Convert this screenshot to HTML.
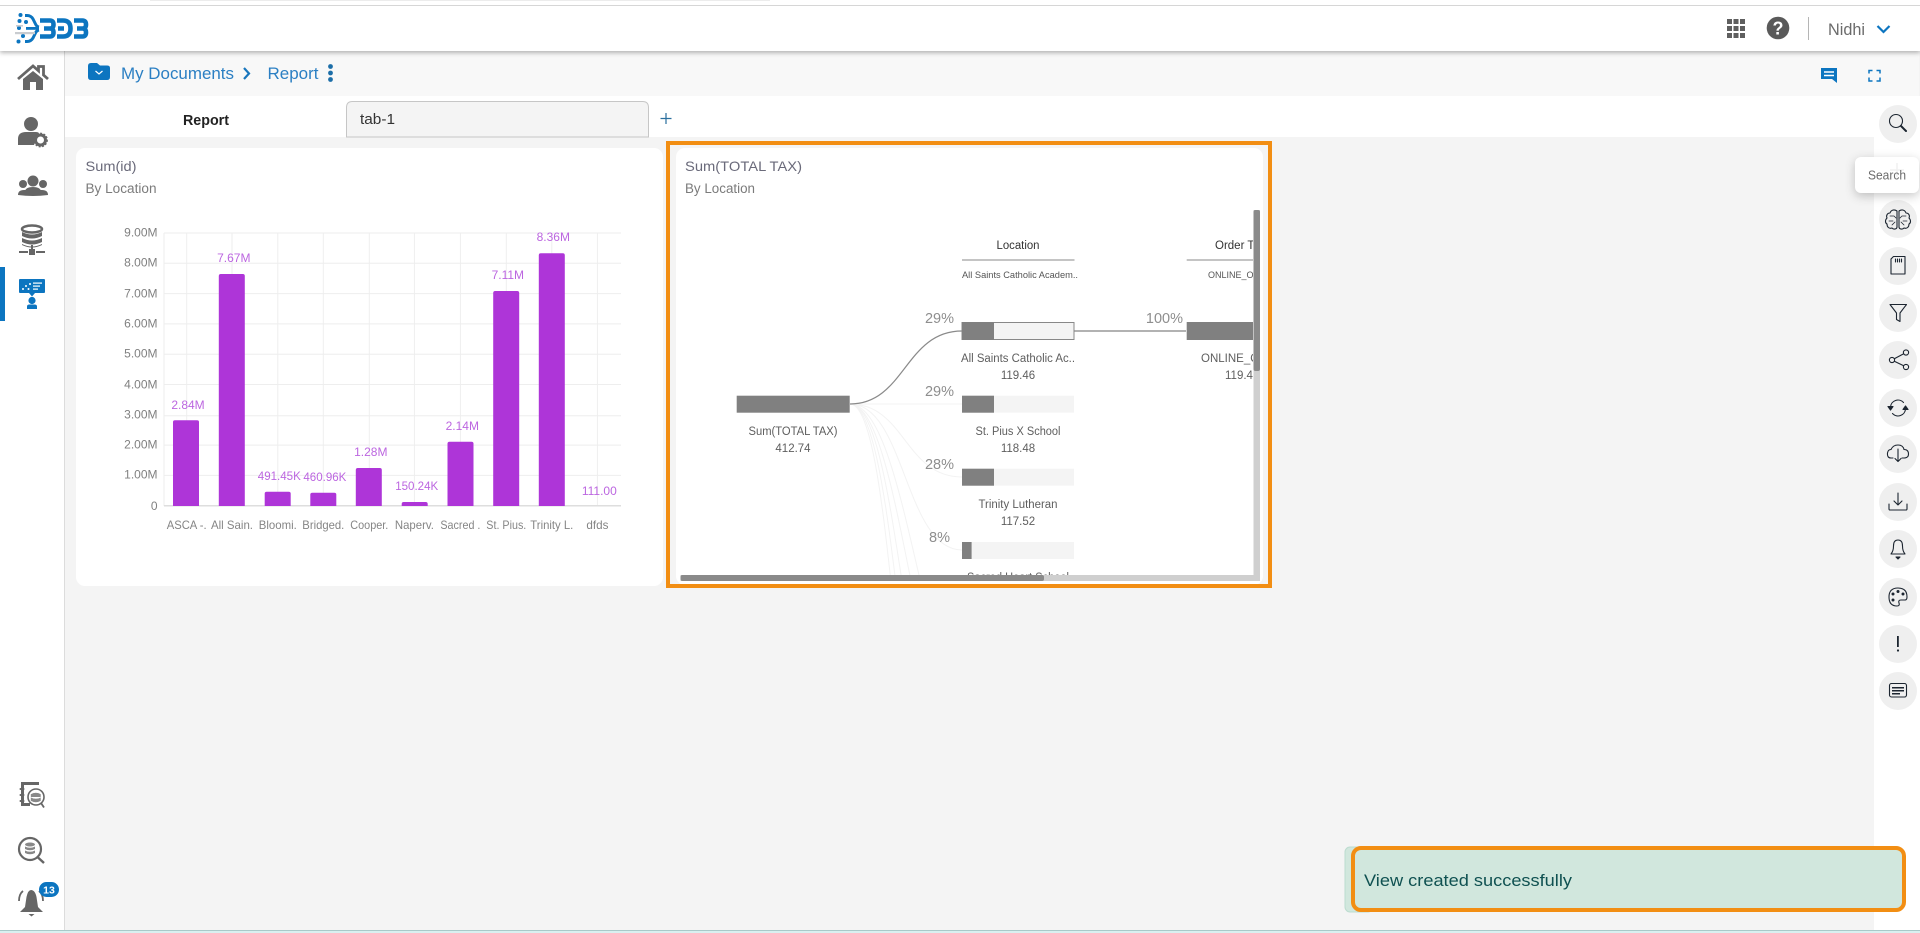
<!DOCTYPE html>
<html lang="en">
<head>
<meta charset="utf-8">
<title>My Documents - Report</title>
<style>
html,body{margin:0;padding:0;background:#fff;width:1920px;height:933px;overflow:hidden}
svg{display:block;position:absolute;left:0;top:0;font-family:"Liberation Sans",sans-serif}
</style>
</head>
<body>
<svg width="1920" height="933" viewBox="0 0 1920 933" xmlns="http://www.w3.org/2000/svg">
<defs>
<clipPath id="c2"><rect x="676" y="148" width="577" height="427"/></clipPath>
</defs>
<!-- backgrounds -->
<rect width="1920" height="933" fill="#fff"/>
<rect x="65" y="51" width="1855" height="879" fill="#f4f4f4"/>
<rect x="65" y="51" width="1854" height="45" fill="#f8f8f8"/>
<rect x="65" y="96" width="1809" height="41" fill="#fff"/>
<rect x="1874" y="96" width="46" height="834" fill="#fff"/>
<rect x="64" y="51" width="1" height="879" fill="#dcdcdc"/>
<rect x="0" y="930" width="1920" height="1" fill="#a9c9c9"/>
<rect x="0" y="931" width="1920" height="2" fill="#d9f0f0"/>
<!-- top strip + header -->
<rect x="0" y="6" width="1920" height="45" fill="#fff" style="filter:drop-shadow(0 2px 2px rgba(0,0,0,.28))"/>
<rect x="0" y="0" width="1920" height="5" fill="#fff"/>
<rect x="150" y="0" width="620" height="1" fill="#ececec"/>
<rect x="0" y="5" width="1920" height="1" fill="#d6d6d6"/>
<!-- logo -->
<g fill="none" stroke="#0c75c0" stroke-width="4.600" stroke-linejoin="round">
<path d="M40 20.500H50Q53.500 20.500 53.500 24.500Q53.500 28.500 50 28.500H44M50 28.500Q53.500 28.500 53.500 32.500Q53.500 36.500 50 36.500H40"/>
<path d="M57 20.500H63Q70.500 20.500 70.500 28.500Q70.500 36.500 63 36.500H57M58 28.500H64"/>
<path d="M74 20.500H82.500Q86 20.500 86 24.500Q86 28.500 82.500 28.500H77M82.500 28.500Q86 28.500 86 32.500Q86 36.500 82.500 36.500H74"/>
<path d="M25 15.500H27Q31 15.500 33 19L35.500 24Q36.500 26.500 39 27" stroke-width="3"/>
<path d="M25 41.500H27Q31 41.500 33 38L35.500 33Q36.500 30.500 39 30" stroke-width="3"/>
</g>
<g fill="#0c75c0"><circle cx="20.500" cy="15" r="2"/><circle cx="19.500" cy="21" r="2"/><circle cx="26" cy="22" r="2"/><circle cx="19" cy="28" r="2"/><circle cx="18.500" cy="41.500" r="2"/><circle cx="23" cy="36" r="2"/><rect x="26" y="27" width="13" height="2.800"/></g>
<rect x="15" y="32" width="20" height="2.200" fill="#c9ccd0"/>
<rect x="16" y="25" width="7" height="1.600" fill="#c9ccd0"/>
<!-- header right -->
<g fill="#5f5f5f">
<rect x="1727" y="19" width="5" height="5"/><rect x="1733.500" y="19" width="5" height="5"/><rect x="1740" y="19" width="5" height="5"/>
<rect x="1727" y="26" width="5" height="5"/><rect x="1733.500" y="26" width="5" height="5"/><rect x="1740" y="26" width="5" height="5"/>
<rect x="1727" y="33" width="5" height="5"/><rect x="1733.500" y="33" width="5" height="5"/><rect x="1740" y="33" width="5" height="5"/>
</g>
<circle cx="1778" cy="28" r="11.300" fill="#5a5a5a"/>
<text x="1778" y="34.500" text-anchor="middle" font-size="18" font-weight="700" fill="#fff">?</text>
<rect x="1808" y="17" width="1" height="23" fill="#b5b5b5"/>
<text x="1828" y="35" font-size="16.500" fill="#6b6b6b" textLength="37" lengthAdjust="spacingAndGlyphs">Nidhi</text>
<path d="M1877.500 26L1883.500 32L1889.500 26" fill="none" stroke="#0c75c0" stroke-width="2.200"/>
<!-- breadcrumb -->
<path d="M88 66Q88 63 91 63H97L100 65.500H107Q110 65.500 110 68V77Q110 80 107 80H91Q88 80 88 77Z" fill="#0c75c0"/>
<path d="M95.500 71L99 74L102.500 71" fill="none" stroke="#fff" stroke-width="1.200"/>
<text x="121" y="79" font-size="17" fill="#2b7fc3" textLength="113" lengthAdjust="spacingAndGlyphs">My Documents</text>
<path d="M244 68L249 73.500L244 79" fill="none" stroke="#1976bd" stroke-width="2.200"/>
<text x="267.500" y="79" font-size="17" fill="#2b7fc3" textLength="51" lengthAdjust="spacingAndGlyphs">Report</text>
<g fill="#1c6ea8"><circle cx="330.500" cy="66.500" r="2.400"/><circle cx="330.500" cy="73" r="2.400"/><circle cx="330.500" cy="79.500" r="2.400"/></g>
<path d="M1821 68H1837V83L1832 79H1821Z" fill="#0c75c0"/>
<path d="M1824 72H1834M1824 75.500H1834" stroke="#fff" stroke-width="1.500"/>
<path d="M1869 73.500V70.500H1872.500M1876.500 70.500H1880V73.500M1880 77.500V81H1876.500M1872.500 81H1869V77.500" fill="none" stroke="#0c75c0" stroke-width="1.500"/>
<!-- tab row -->
<text x="183" y="125" font-size="15" font-weight="700" fill="#222" textLength="46" lengthAdjust="spacingAndGlyphs">Report</text>
<path d="M346.500 137V107.500Q346.500 101.500 352.500 101.500H642.500Q648.500 101.500 648.500 107.500V137Z" fill="#f4f4f4" stroke="#c6c6c6"/>
<text x="360" y="124" font-size="15" fill="#333" textLength="35" lengthAdjust="spacingAndGlyphs">tab-1</text>
<path d="M660.500 118.500H671.500M666 113V124" stroke="#2a6f9e" stroke-width="1.200"/>
<!-- left sidebar -->
<rect x="0" y="267" width="5" height="54" fill="#0c75c0"/>
<g fill="#666">
<path d="M23 79L33 71L43 79V90H36V82H30V90H23Z"/>
<path d="M18 79L33 66L38.500 70.800V66.500H43.500V75L48 79" fill="none" stroke="#666" stroke-width="2.800"/>
<circle cx="31" cy="124" r="7"/>
<path d="M18 145V139Q18 132 26 132H36Q38 132 39 133L34 145Z"/>
<circle cx="40.500" cy="140" r="5" fill="none" stroke="#666" stroke-width="3"/>
<circle cx="40.500" cy="140" r="6.800" fill="none" stroke="#666" stroke-width="1.200" stroke-dasharray="2 1.500"/>
<circle cx="33" cy="181" r="5.500"/><circle cx="23" cy="184" r="4"/><circle cx="43" cy="184" r="4"/>
<path d="M18 195Q18 190 24 190H42Q48 190 48 195Q33 197 18 195Z"/><path d="M25 191Q26 187 33 187Q40 187 41 191V195H25Z"/>
<ellipse cx="32" cy="229" rx="10" ry="3.500" fill="none" stroke="#666" stroke-width="2.500"/>
<path d="M22 232V236Q32 241 42 236V232Q32 237 22 232Z"/><path d="M22 238V242Q32 247 42 242V238Q32 243 22 238Z"/><path d="M22 244V245Q32 250 42 245V244Q32 249 22 244Z"/>
<rect x="29" y="249" width="6" height="6"/><rect x="31" y="245" width="2" height="5"/><rect x="19" y="251" width="9" height="2"/><rect x="36" y="251" width="9" height="2"/>
<rect x="21" y="782" width="18" height="3"/><path d="M21 785V806H30V803H24V785Z"/>
<rect x="19.500" y="788" width="5" height="2" rx="1"/><rect x="19.500" y="794" width="5" height="2" rx="1"/><rect x="19.500" y="800" width="5" height="2" rx="1"/>
</g>
<circle cx="36" cy="797" r="8" fill="#fff" stroke="#666" stroke-width="1.600"/>
<path d="M30.500 794Q36 791 41 794V801Q36 804 30.500 801ZM30.500 797Q36 800 41 797" fill="#888" stroke="#fff" stroke-width=".6"/>
<path d="M41 803L44 807.500" stroke="#666" stroke-width="1.800"/>
<circle cx="30" cy="849" r="11" fill="#fff" stroke="#666" stroke-width="2.200"/>
<path d="M38 857.500L44 863" stroke="#666" stroke-width="2.400"/>
<g fill="#888"><ellipse cx="30" cy="844.500" rx="5" ry="2"/><path d="M25 846.500Q30 849 35 846.500V849Q30 851.500 25 849Z"/><path d="M25 850.500Q30 853 35 850.500V853Q30 855.500 25 853Z"/></g>
<path d="M31 890Q35 890 36.500 897L38 907L43 912H20L25 907L26.500 897Q28 890 31 890Z" fill="#666"/>
<path d="M28.500 914H34.500L31.500 916.500Z" fill="#666"/>
<path d="M19 901Q19 894 23 891M43 901Q43 894 39 891" fill="none" stroke="#666" stroke-width="1.800"/>
<rect x="39" y="882" width="20" height="15" rx="7.500" fill="#0c75c0"/>
<text x="49" y="893.500" text-anchor="middle" font-size="10.500" font-weight="700" fill="#fff">13</text>
<!-- report icon -->
<rect x="19" y="279" width="26" height="14" rx="1" fill="#0c75c0"/>
<path d="M29 293H35L32 296.500Z" fill="#0c75c0"/>
<circle cx="32" cy="300.500" r="3.600" fill="#0c75c0"/>
<path d="M27 309V306.500Q27 304.500 29.500 304.500H34.500Q37 304.500 37 306.500V309Z" fill="#0c75c0"/>
<g fill="#fff"><circle cx="23" cy="289" r="1"/><circle cx="26" cy="286" r="1"/><circle cx="28.500" cy="289" r="1"/><circle cx="30" cy="284" r="1"/><rect x="33" y="282.500" width="9" height="1.200"/><rect x="33" y="285.500" width="7" height="1.200"/><rect x="33" y="288.500" width="5" height="1.200"/></g>
<!-- card 1 -->
<rect x="76" y="148" width="587" height="438" rx="9" fill="#fff"/>
<text x="85.500" y="171" font-size="14" fill="#6a6a7a" textLength="51" lengthAdjust="spacingAndGlyphs">Sum(id)</text>
<text x="85.500" y="193" font-size="13.500" fill="#7b7b7b" textLength="71" lengthAdjust="spacingAndGlyphs">By Location</text>
<g stroke="#eeeeee" stroke-width="1">
<path d="M164 233H621M164 263.300H621M164 293.600H621M164 323.900H621M164 354.200H621M164 384.500H621M164 415.800H621M164 445.100H621M164 475.400H621"/>
<path d="M186.700 233V506M232 233V506M277.800 233V506M323.300 233V506M369.300 233V506M414.400 233V506M460.400 233V506M506.300 233V506M551.800 233V506M597.400 233V506M164 233V506"/>
</g>
<rect x="164" y="505" width="457" height="1.500" fill="#dedede"/>
<g font-size="12" fill="#808080" text-anchor="end">
<text x="157.500" y="236.500">9.00M</text><text x="157.500" y="266.500">8.00M</text><text x="157.500" y="297.500">7.00M</text><text x="157.500" y="327.500">6.00M</text><text x="157.500" y="357.500">5.00M</text><text x="157.500" y="388.500">4.00M</text><text x="157.500" y="418.500">3.00M</text><text x="157.500" y="448.500">2.00M</text><text x="157.500" y="478.500">1.00M</text><text x="157.500" y="510">0</text>
</g>
<g fill="#ae35d8">
<path d="M173 506V422Q173 420.300 175 420.300H197Q199 420.300 199 422V506Z"/>
<path d="M218.800 506V276Q218.800 274 220.800 274H242.800Q244.800 274 244.800 276V506Z"/>
<path d="M264.700 506V493.500Q264.700 491.700 266.700 491.700H288.700Q290.700 491.700 290.700 493.500V506Z"/>
<path d="M310.300 506V494.500Q310.300 492.700 312.300 492.700H334.300Q336.300 492.700 336.300 494.500V506Z"/>
<path d="M355.800 506V470Q355.800 468 357.800 468H379.800Q381.800 468 381.800 470V506Z"/>
<path d="M401.700 506V504Q401.700 502 403.700 502H425.700Q427.700 502 427.700 504V506Z"/>
<path d="M447.500 506V443.700Q447.500 441.700 449.500 441.700H471.500Q473.500 441.700 473.500 443.700V506Z"/>
<path d="M493.200 506V293Q493.200 291 495.200 291H517.200Q519.200 291 519.200 293V506Z"/>
<path d="M538.800 506V255.300Q538.800 253.300 540.800 253.300H562.800Q564.800 253.300 564.800 255.300V506Z"/>
</g>
<g font-size="12" fill="#bc66e0" text-anchor="middle">
<text x="188" y="409">2.84M</text><text x="233.800" y="262">7.67M</text>
<text x="279.300" y="480" textLength="43" lengthAdjust="spacingAndGlyphs">491.45K</text>
<text x="324.900" y="481" textLength="43" lengthAdjust="spacingAndGlyphs">460.96K</text>
<text x="370.800" y="456">1.28M</text>
<text x="416.700" y="490" textLength="43" lengthAdjust="spacingAndGlyphs">150.24K</text>
<text x="462.300" y="430">2.14M</text><text x="507.800" y="279">7.11M</text><text x="553.300" y="241">8.36M</text>
<text x="599.300" y="495">111.00</text>
</g>
<g font-size="12" fill="#858585" text-anchor="middle">
<text x="186.700" y="529" textLength="40" lengthAdjust="spacingAndGlyphs">ASCA -.</text>
<text x="232" y="529" textLength="42" lengthAdjust="spacingAndGlyphs">All Sain.</text>
<text x="277.800" y="529" textLength="38" lengthAdjust="spacingAndGlyphs">Bloomi.</text>
<text x="323.300" y="529" textLength="42" lengthAdjust="spacingAndGlyphs">Bridged.</text>
<text x="369.300" y="529" textLength="38" lengthAdjust="spacingAndGlyphs">Cooper.</text>
<text x="414.400" y="529" textLength="39" lengthAdjust="spacingAndGlyphs">Naperv.</text>
<text x="460.400" y="529" textLength="40" lengthAdjust="spacingAndGlyphs">Sacred .</text>
<text x="506.300" y="529" textLength="40" lengthAdjust="spacingAndGlyphs">St. Pius.</text>
<text x="551.800" y="529" textLength="43" lengthAdjust="spacingAndGlyphs">Trinity L.</text>
<text x="597.400" y="529" textLength="22" lengthAdjust="spacingAndGlyphs">dfds</text>
</g>
<!-- card 2 -->
<rect x="676" y="148" width="587" height="437" rx="9" fill="#fff"/>
<rect x="668" y="143" width="602" height="443" fill="none" stroke="#f28e13" stroke-width="4"/>
<text x="685" y="171" font-size="14" fill="#6a6a7a" textLength="117" lengthAdjust="spacingAndGlyphs">Sum(TOTAL TAX)</text>
<text x="685" y="193" font-size="13.500" fill="#7b7b7b" textLength="70" lengthAdjust="spacingAndGlyphs">By Location</text>
<g clip-path="url(#c2)">
<g fill="none" stroke="#f3f3f3" stroke-width="1">
<path d="M850 404H962"/>
<path d="M850 404C905 404 905 477 962 477"/>
<path d="M850 404C905 404 905 550 962 550"/>
<path d="M850 404C885 404 905 520 925 600"/>
<path d="M850 404C880 404 898 520 915 600"/>
<path d="M850 404C878 404 892 520 905 600"/>
<path d="M850 404C875 404 888 520 898 600"/>
<path d="M850 404C873 404 884 520 893 600"/>
</g>
<path d="M850 404C905 404 905 331 962 331" fill="none" stroke="#8a8a8a" stroke-width="1.200"/>
<path d="M1074 331H1186" fill="none" stroke="#999" stroke-width="1.600"/>
<rect x="736.700" y="395.700" width="113" height="17" fill="#808080"/>
<g font-size="11.500" fill="#5e5e5e" text-anchor="middle">
<text x="793" y="435" textLength="89" lengthAdjust="spacingAndGlyphs">Sum(TOTAL TAX)</text>
<text x="793" y="452">412.74</text>
<text x="1018" y="362" textLength="114" lengthAdjust="spacingAndGlyphs">All Saints Catholic Ac..</text><text x="1018" y="379">119.46</text>
<text x="1018" y="435" textLength="85" lengthAdjust="spacingAndGlyphs">St. Pius X School</text><text x="1018" y="452">118.48</text>
<text x="1018" y="508" textLength="79" lengthAdjust="spacingAndGlyphs">Trinity Lutheran</text><text x="1018" y="525">117.52</text>
<text x="1018" y="581" textLength="102" lengthAdjust="spacingAndGlyphs">Sacred Heart School</text>
<text x="1201" y="362" text-anchor="start">ONLINE_ORDER</text>
<text x="1225" y="379" text-anchor="start">119.46</text>
</g>
<text x="1018" y="249" text-anchor="middle" font-size="11.500" fill="#333" textLength="43" lengthAdjust="spacingAndGlyphs">Location</text>
<text x="1215" y="249" font-size="11.500" fill="#333">Order Type</text>
<rect x="962" y="259.500" width="112.500" height="1" fill="#888"/>
<rect x="1186.700" y="259.500" width="70" height="1" fill="#888"/>
<text x="962" y="278" font-size="9" fill="#555" textLength="116" lengthAdjust="spacingAndGlyphs">All Saints Catholic Academ..</text>
<text x="1208" y="278" font-size="9" fill="#555">ONLINE_ORDER</text>
<rect x="962" y="322.500" width="112" height="17" fill="#f4f4f4" stroke="#888" stroke-width="1"/>
<rect x="962" y="322" width="32" height="18" fill="#808080"/>
<rect x="962" y="395.700" width="112" height="17" fill="#f4f4f4"/><rect x="962" y="395.700" width="32" height="17" fill="#808080"/>
<rect x="962" y="468.700" width="112" height="17" fill="#f4f4f4"/><rect x="962" y="468.700" width="32" height="17" fill="#808080"/>
<rect x="962" y="542" width="112" height="17" fill="#f4f4f4"/><rect x="962" y="542" width="9.600" height="17" fill="#808080"/>
<rect x="1186.700" y="322" width="70" height="18" fill="#808080"/>
<g font-size="14.500" fill="#8e8e8e" text-anchor="end">
<text x="954" y="323">29%</text><text x="954" y="396">29%</text><text x="954" y="469">28%</text><text x="950" y="542">8%</text><text x="1183" y="323">100%</text>
</g>
</g>
<!-- scrollbars -->
<rect x="1253.500" y="210" width="6.500" height="371" fill="#cfcfcf"/>
<rect x="1253.500" y="210" width="6.500" height="161" rx="2" fill="#8a8a8a"/>
<rect x="680.500" y="575" width="579.500" height="6" fill="#cfcfcf"/>
<rect x="680.500" y="575" width="363.500" height="6" rx="2" fill="#8a8a8a"/>
<!-- right rail circles -->
<g fill="#efefef">
<circle cx="1898" cy="124" r="19"/><circle cx="1898" cy="219" r="19"/><circle cx="1898" cy="266" r="19"/><circle cx="1898" cy="313" r="19"/><circle cx="1898" cy="360" r="19"/><circle cx="1898" cy="408" r="19"/><circle cx="1898" cy="454" r="19"/><circle cx="1898" cy="502" r="19"/><circle cx="1898" cy="549" r="19"/><circle cx="1898" cy="597" r="19"/><circle cx="1898" cy="644" r="19"/><circle cx="1898" cy="691" r="19"/>
</g>
<!-- right rail icons -->
<g fill="none" stroke="#1c2530" stroke-width="1.100" stroke-linecap="round" stroke-linejoin="round">
<circle cx="1896" cy="121" r="6.500"/><path d="M1901 126L1906 131" stroke-width="2"/>
<path d="M1897 211C1894 209 1891 210 1890 213C1887 213 1886 216 1887 218C1885 220 1885 223 1887 224C1887 227 1889 229 1892 228C1894 230 1897 229 1897 227Z"/>
<path d="M1899 211C1902 209 1905 210 1906 213C1909 213 1910 216 1909 218C1911 220 1911 223 1909 224C1909 227 1907 229 1904 228C1902 230 1899 229 1899 227Z"/>
<path d="M1890 216H1894L1896 218M1889 221H1893M1892 225L1895 222M1906 216H1902L1900 218M1907 221H1903M1904 225L1901 222" stroke-width=".8"/>
<path d="M1893.500 256.500H1905V274H1891V259Z"/>
<path d="M1895.500 259V262M1897.500 259V262M1899.500 259V262M1901.500 259V262" stroke-width="1.100"/>
<path d="M1890 304.500H1906.500L1900 313V321.500L1896.500 319.500V313Z"/>
<circle cx="1906" cy="352.500" r="2.600"/><circle cx="1906" cy="367" r="2.600"/><circle cx="1892" cy="360" r="2.600"/><path d="M1894.300 358.700L1903.700 353.800M1894.300 361.300L1903.700 365.700"/>
<path d="M1890.500 407A7.500 7.500 0 0 1 1903.500 402.500M1905.500 409A7.500 7.500 0 0 1 1892.500 413.500"/>
<path d="M1888 406.500H1893L1890.500 410ZM1908 409.500H1903L1905.500 406Z" fill="#1c2530"/>
<path d="M1893 458H1891Q1887 458 1887.500 453Q1888 449.500 1891 449.500Q1893 445 1898 445Q1903 445 1904 449.500Q1908.500 449.500 1908.500 454Q1908.500 458 1904 458H1902"/>
<path d="M1898 449V461M1895 458.500L1898 461.500L1901 458.500"/>
<path d="M1889 504V509Q1889 510 1890 510H1906Q1907 510 1907 509V504"/>
<path d="M1898 493V505M1894 501L1898 505L1902 501"/>
<path d="M1891 554H1905Q1902.500 551 1902.500 546Q1902.500 540 1898 540Q1893.500 540 1893.500 546Q1893.500 551 1891 554Z"/>
<path d="M1896 557H1900L1898 559Z" fill="#1c2530"/>
<path d="M1898 588Q1889 588 1889 597Q1889 606 1897 606Q1900 606 1899 603Q1898 600 1901 600H1905Q1907 600 1907 597Q1907 588 1898 588Z"/>
<rect x="1889.500" y="683.500" width="17" height="13.500" rx="2"/>
</g>
<g fill="#1c2530">
<circle cx="1893" cy="594" r="1.500"/><circle cx="1898" cy="591.500" r="1.500"/><circle cx="1903" cy="594" r="1.500"/><circle cx="1893" cy="600" r="1.500"/>
<rect x="1897" y="636" width="1.800" height="11"/><circle cx="1898" cy="650.500" r="1.100"/>
<rect x="1892" y="687" width="12" height="1.500"/><rect x="1892" y="690" width="12" height="1.500"/><rect x="1892" y="693" width="8" height="1.500"/>
</g>
<!-- tooltip -->
<path d="M1891 157L1897 151L1903 157Z" fill="#fff"/>
<rect x="1855" y="157" width="64" height="36" rx="6" fill="#fff" style="filter:drop-shadow(0 3px 5px rgba(0,0,0,.22))"/>
<path d="M1897 163V177M1890 170H1904" stroke="#f0f0f0" stroke-width="1.500"/>
<text x="1868" y="179.500" font-size="12.500" fill="#6b6b6b" textLength="38" lengthAdjust="spacingAndGlyphs">Search</text>
<!-- toast -->
<rect x="1345" y="847" width="28" height="65" rx="5" fill="#d1e7dd" stroke="#bcdccf" stroke-width="1"/>
<rect x="1353" y="848" width="551" height="62" rx="8" fill="#d1e7dd" stroke="#f28e13" stroke-width="4"/>
<text x="1364" y="886" font-size="17" fill="#0f5151" textLength="208" lengthAdjust="spacingAndGlyphs">View created successfully</text>
</svg>
</body>
</html>
